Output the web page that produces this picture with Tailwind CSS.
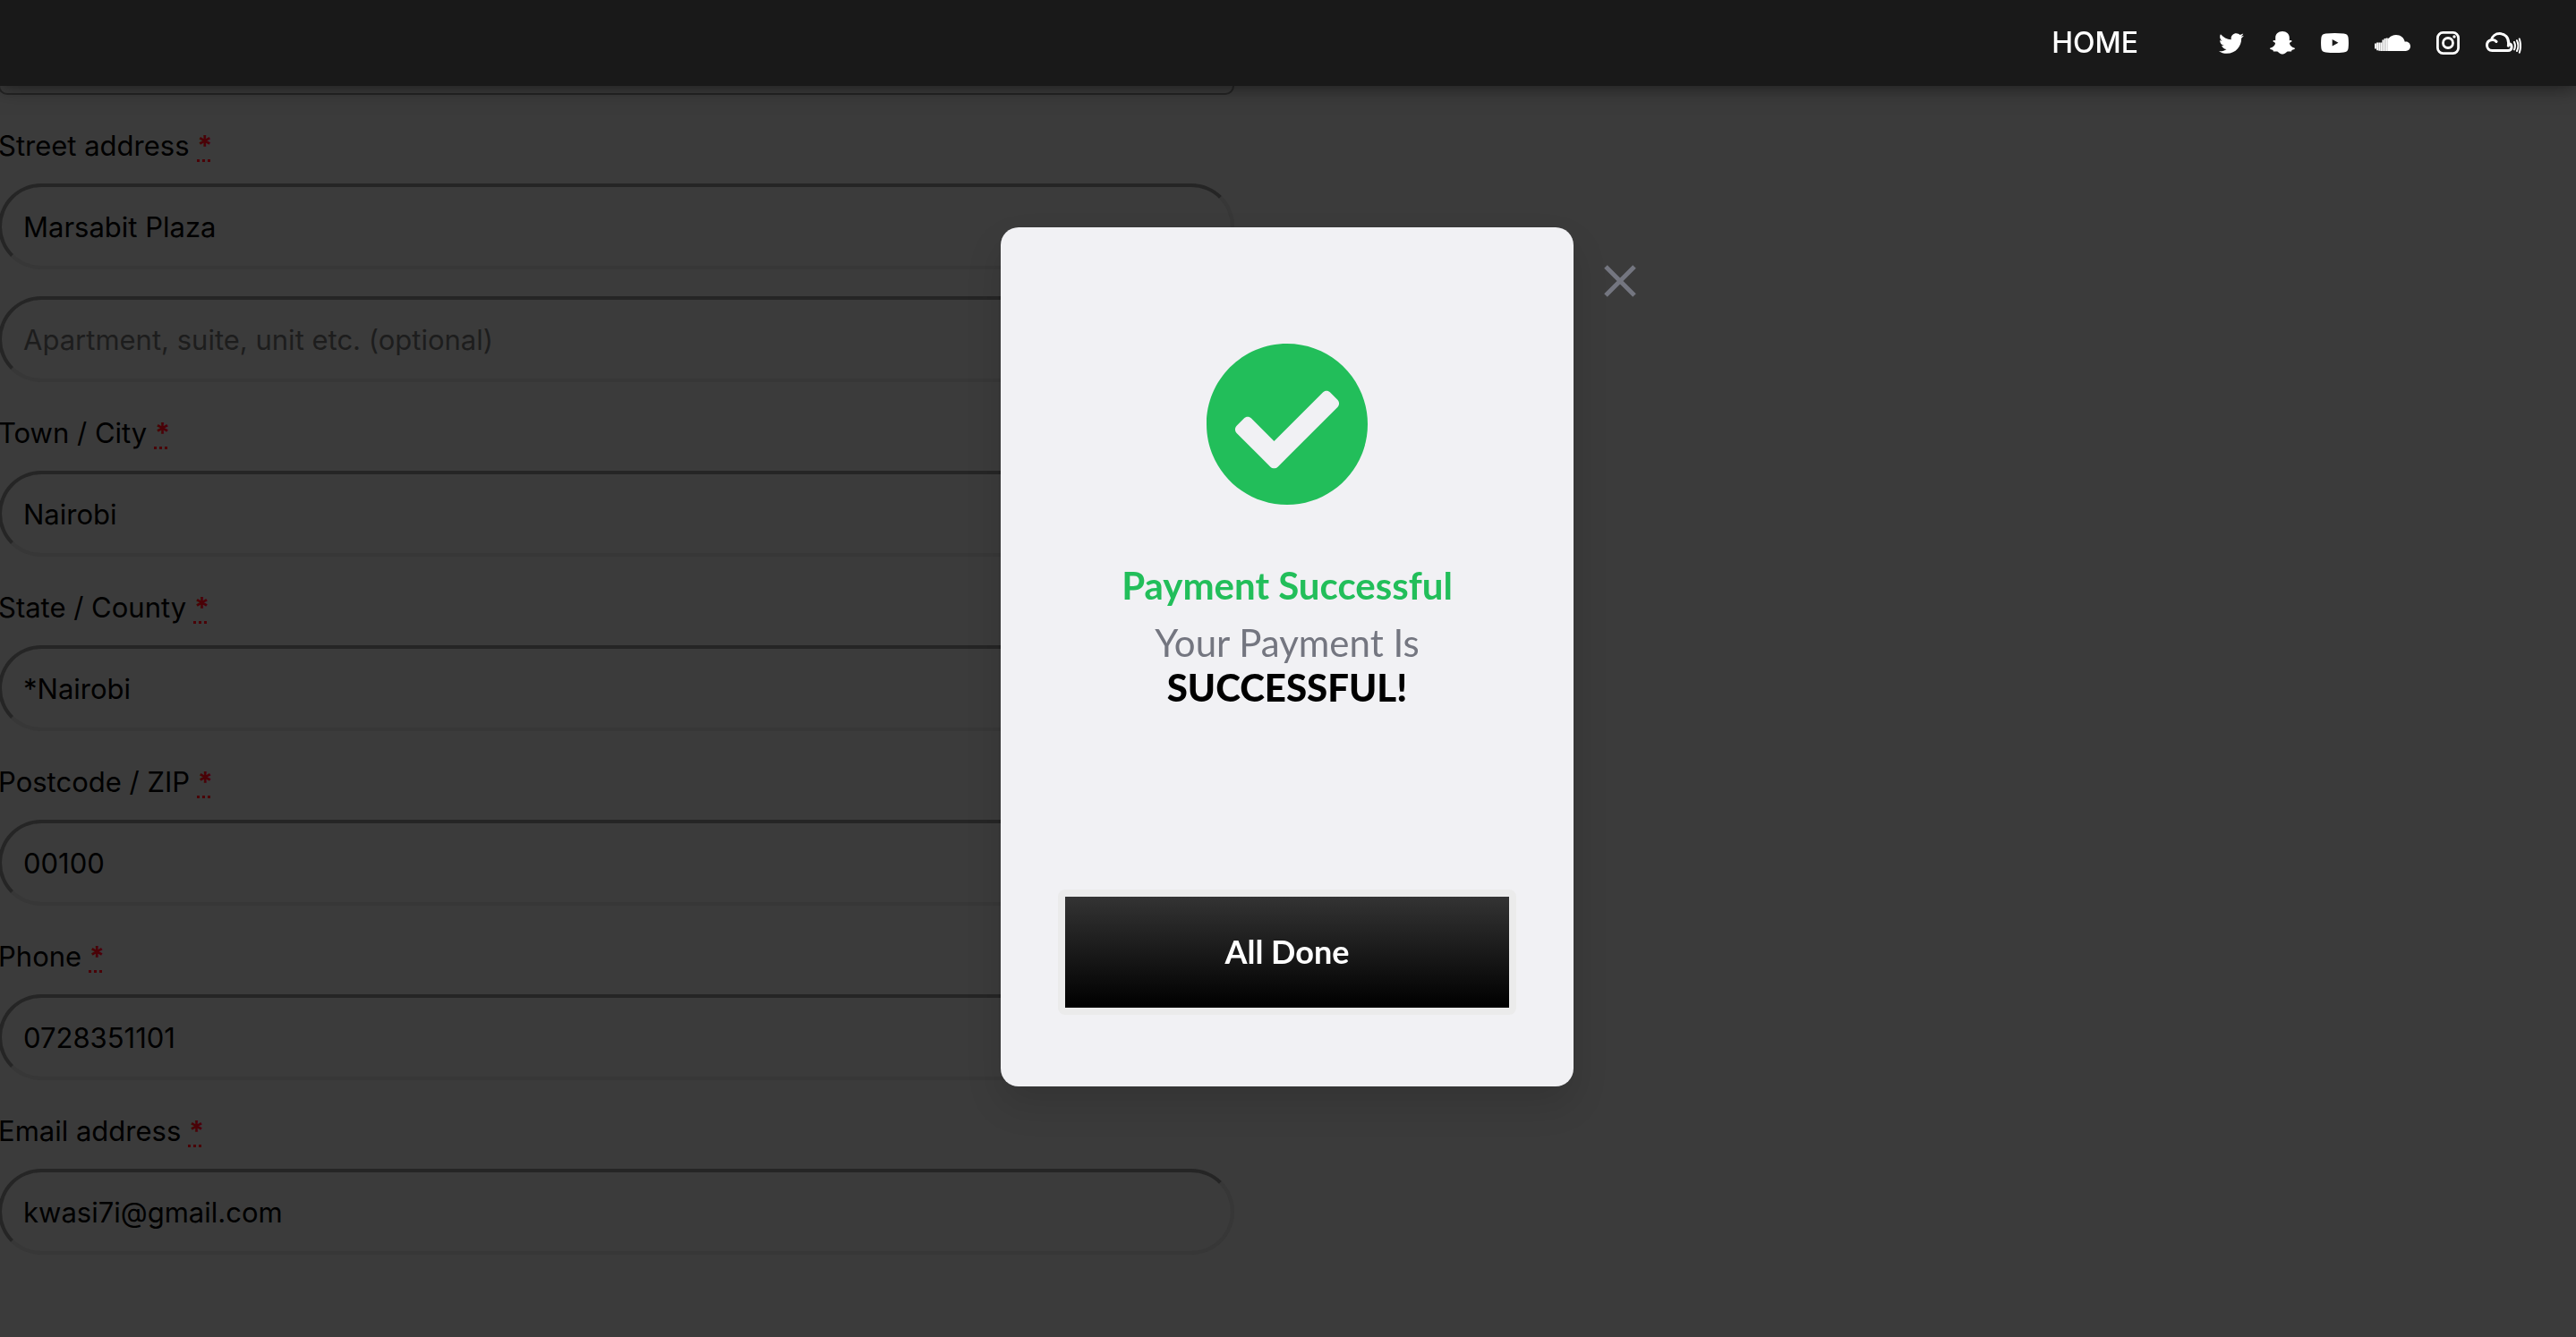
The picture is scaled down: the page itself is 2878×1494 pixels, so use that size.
<!DOCTYPE html>
<html lang="en">
<head>
<meta charset="utf-8">
<meta name="viewport" content="width=device-width, initial-scale=1">
<title>Checkout</title>
<script src="https://cdn.jsdelivr.net/npm/@tailwindcss/browser@4"></script>
</head>
<body class="min-h-screen overflow-hidden bg-[#3b3b3b] font-['Inter',sans-serif] text-[31px] text-black">

<header class="fixed inset-x-0 top-0 z-10 flex h-24 items-center justify-end bg-[#191919] pr-[61px] text-white shadow-[0_2px_20px_rgba(0,0,0,0.5)]">
  <nav class="mr-[90px]"><a href="#" class="text-[32px] leading-none font-medium">HOME</a></nav>
  <ul class="flex items-center gap-[29px]">
    <li><a href="#" aria-label="Twitter" class="block">
      <svg class="h-[23px] w-7" viewBox="0 48 512 416" fill="currentColor"><path d="M459.37 151.716c.325 4.548.325 9.097.325 13.645 0 138.72-105.583 298.558-298.558 298.558-59.452 0-114.68-17.219-161.137-47.106 8.447.974 16.568 1.299 25.34 1.299 49.055 0 94.213-16.568 130.274-44.832-46.132-.975-84.792-31.188-98.112-72.772 6.498.974 12.995 1.624 19.818 1.624 9.421 0 18.843-1.3 27.614-3.573-48.081-9.747-84.143-51.98-84.143-102.985v-1.299c13.969 7.797 30.214 12.67 47.431 13.319-28.264-18.843-46.781-51.005-46.781-87.391 0-19.492 5.197-37.36 14.294-52.954 51.655 63.675 129.3 105.258 216.365 109.807-1.624-7.797-2.599-15.918-2.599-24.04 0-57.828 46.782-104.934 104.934-104.934 30.213 0 57.502 12.67 76.67 33.137 23.715-4.548 46.456-13.32 66.599-25.34-7.798 24.366-24.366 44.833-46.132 57.827 21.117-2.273 41.584-8.122 60.426-16.243-14.292 20.791-32.161 39.308-52.628 54.253z"/></svg>
    </a></li>
    <li><a href="#" aria-label="Snapchat" class="block">
      <svg class="h-[26px] w-7" viewBox="0 0 28 26" fill="currentColor"><path d="M14 0c4.600 0 7.800 3 7.800 7v3.200c.5.300 1.300-.3 1.900-.1.900.3 1 1.200.3 1.700-.8.600-2.100.7-2 1.700.4 2.200 2.300 4.400 5.200 5.100.8.200 1 1 .2 1.500-.9.600-2.300.7-2.800.9-.4.300-.1 1.200-.7 1.500-.8.300-2.300-.3-4 .1-1.800.6-2.800 3-5.900 3s-4.100-2.400-5.900-3c-1.700-.4-3.200.2-4-.1-.6-.3-.3-1.200-.7-1.500-.5-.2-1.900-.3-2.800-.9-.8-.5-.6-1.300.2-1.500 2.900-.7 4.800-2.900 5.200-5.100.1-1-1.200-1.100-2-1.700-.7-.5-.6-1.400.3-1.700.6-.2 1.400.4 1.900.1V7c0-4 3.200-7 7.800-7z"/></svg>
    </a></li>
    <li><a href="#" aria-label="YouTube" class="block">
      <svg class="h-[22px] w-[31px]" viewBox="0 0 31 22" fill="currentColor" fill-rule="evenodd"><path d="M5.500.5Q15.500-.5 25.500.5 30.200.8 30.600 5q.7 6 0 12-.4 4.200-5.100 4.500-10 1-20 0Q.8 21.200.4 17q-.7-6 0-12Q.8.800 5.500.5zM12.700 7v7.600l6.800-3.800z"/></svg>
    </a></li>
    <li><a href="#" aria-label="SoundCloud" class="block">
      <svg class="h-[18px] w-10" viewBox="0 0 40 18" fill="currentColor"><path d="M16 3.600C17.800 1.200 20.800 0 24 0c5 0 9 3.300 9.800 7.800 3.300-.9 6.200 1.700 6.200 5 0 2.900-2.300 5.200-5.200 5.200H16z"/><path d="M1 9.500v6M3.100 8.500v8.800M5.200 8.500v9.300M7.300 8.500V18M9.400 5.500V18M11.500 4v14M13.600 3.500V18M15.600 3.700V18" fill="none" stroke="currentColor" stroke-width="1.850"/></svg>
    </a></li>
    <li><a href="#" aria-label="Instagram" class="block">
      <svg class="size-[26px]" viewBox="0 0 26 26" fill="none" stroke="currentColor" stroke-width="2.800"><rect x="1.400" y="1.400" width="23.200" height="23.200" rx="6"/><circle cx="13" cy="13" r="5.500"/><circle cx="20" cy="6" r="1.700" fill="currentColor" stroke="none"/></svg>
    </a></li>
    <li><a href="#" aria-label="Mixcloud" class="block">
      <svg class="h-6 w-10" viewBox="0 0 40 24" fill="none" stroke="currentColor" stroke-width="3" stroke-linecap="round"><path d="M12 10.500C10.500 8.500 7.800 8.300 6 8.700 3.200 9.400 1.500 11.900 1.500 14.600c0 3.400 2.600 5.900 5.800 5.900H25c2.500 0 4.100-1.700 4.100-4 0-2.200-1.400-3.700-3.400-4.100 0-6.500-4-10.800-10-10.800-4.700 0-8.300 3-9.300 7"/><path d="M25.700 12.400c0 1-.1 1.900-.4 2.700"/><path d="M32 11c1.200 2.600 1.200 5.800 0 8.400M35 9.200c1.800 3.600 1.800 8.200 0 11.800M37.800 7.500c1.500 4.500 1.500 10.700 0 15.200" stroke-width="2"/></svg>
    </a></li>
  </ul>
</header>

<main class="pt-[26px]">
  <form class="-ml-0.5 flex w-[48%] flex-col gap-[33px]">
    <select aria-label="Country / Region" class="h-20 w-full appearance-none rounded-[10px] border-2 border-[#252525] px-6"><option></option></select>

    <div class="flex flex-col gap-[30px]">
      <div class="flex flex-col gap-[18px]">
        <label for="street" class="leading-[48px]">Street address <abbr title="required" class="font-bold text-[#4a0207] underline decoration-dotted decoration-3 underline-offset-4">*</abbr></label>
        <input id="street" type="text" value="Marsabit Plaza" class="h-24 w-full rounded-full border-4 border-[#373737] border-t-[#252525] border-l-[#252525] px-6">
      </div>
      <input type="text" aria-label="Apartment" placeholder="Apartment, suite, unit etc. (optional)" class="h-24 w-full rounded-full border-4 border-[#373737] border-t-[#252525] border-l-[#252525] px-6 placeholder:text-[#1d1d1d]">
    </div>

    <div class="flex flex-col gap-[18px]">
      <label for="city" class="leading-[48px]">Town / City <abbr title="required" class="font-bold text-[#4a0207] underline decoration-dotted decoration-3 underline-offset-4">*</abbr></label>
      <input id="city" type="text" value="Nairobi" class="h-24 w-full rounded-full border-4 border-[#373737] border-t-[#252525] border-l-[#252525] px-6">
    </div>

    <div class="flex flex-col gap-[18px]">
      <label for="state" class="leading-[48px]">State / County <abbr title="required" class="font-bold text-[#4a0207] underline decoration-dotted decoration-3 underline-offset-4">*</abbr></label>
      <input id="state" type="text" value="*Nairobi" class="h-24 w-full rounded-full border-4 border-[#373737] border-t-[#252525] border-l-[#252525] px-6">
    </div>

    <div class="flex flex-col gap-[18px]">
      <label for="zip" class="leading-[48px]">Postcode / ZIP <abbr title="required" class="font-bold text-[#4a0207] underline decoration-dotted decoration-3 underline-offset-4">*</abbr></label>
      <input id="zip" type="text" value="00100" class="h-24 w-full rounded-full border-4 border-[#373737] border-t-[#252525] border-l-[#252525] px-6">
    </div>

    <div class="flex flex-col gap-[18px]">
      <label for="phone" class="leading-[48px]">Phone <abbr title="required" class="font-bold text-[#4a0207] underline decoration-dotted decoration-3 underline-offset-4">*</abbr></label>
      <input id="phone" type="tel" value="0728351101" class="h-24 w-full rounded-full border-4 border-[#373737] border-t-[#252525] border-l-[#252525] px-6">
    </div>

    <div class="flex flex-col gap-[18px]">
      <label for="email" class="leading-[48px]">Email address <abbr title="required" class="font-bold text-[#4a0207] underline decoration-dotted decoration-3 underline-offset-4">*</abbr></label>
      <input id="email" type="email" value="kwasi7i@gmail.com" class="h-24 w-full rounded-full border-4 border-[#373737] border-t-[#252525] border-l-[#252525] px-6">
    </div>
  </form>
</main>

<div class="fixed inset-0 z-20 flex items-start justify-center pt-[254px] pr-0.5 font-['Lato',sans-serif]">
  <section role="dialog" aria-modal="true" aria-labelledby="dialog-title" class="relative flex h-[960px] w-[640px] flex-col items-center rounded-[20px] bg-[#f1f1f4] px-16 pt-[130px] pb-20 text-center text-[42px] leading-[50px] shadow-[0_20px_40px_rgba(0,0,0,0.12)]">
    <svg class="size-[180px] text-[#22be5a]" viewBox="8 8 496 496" fill="currentColor" aria-hidden="true"><path d="M504 256c0 136.967-111.033 248-248 248S8 392.967 8 256 119.033 8 256 8s248 111.033 248 248zM227.314 387.314l184-184c6.248-6.248 6.248-16.379 0-22.627l-22.627-22.627c-6.248-6.249-16.379-6.249-22.628 0L216 308.118l-70.059-70.059c-6.248-6.248-16.379-6.248-22.628 0l-22.627 22.627c-6.248 6.248-6.248 16.379 0 22.627l104 104c6.249 6.249 16.379 6.249 22.628.001z"/></svg>
    <h1 id="dialog-title" class="mt-[65px] font-bold text-[#22be5a]">Payment Successful</h1>
    <p class="mt-[14px] text-[#747680]">Your Payment Is<br><strong class="font-black text-black">SUCCESSFUL!</strong></p>
    <button type="button" class="mt-auto h-[140px] w-full rounded-lg border-8 border-[#ebebeb] bg-linear-to-b/srgb from-[#333333] to-black bg-clip-padding pb-0.5 text-4xl font-bold text-white">All Done</button>
    <button type="button" aria-label="Close" class="absolute top-[42px] left-[calc(100%+34px)] text-[#747680]">
      <svg class="size-9" viewBox="0 0 36 36" fill="none" stroke="currentColor" stroke-width="5"><path d="M2 2l32 32M34 2L2 34"/></svg>
    </button>
  </section>
</div>

</body>
</html>
